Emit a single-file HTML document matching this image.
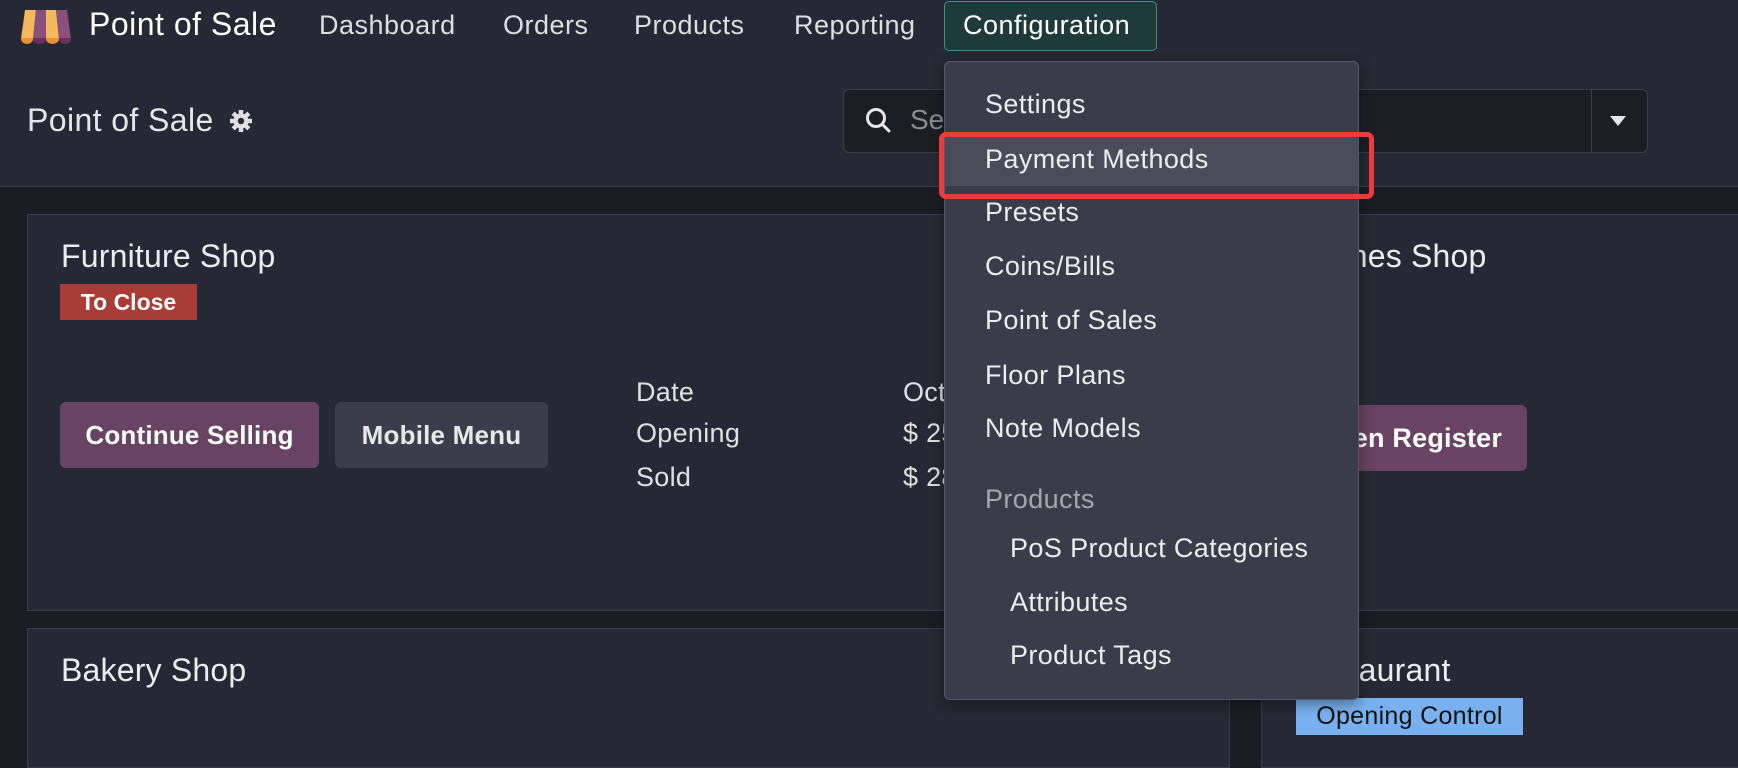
<!DOCTYPE html>
<html><head><meta charset="utf-8"><style>
*{box-sizing:border-box;margin:0;padding:0}
body{width:1738px;height:750px;overflow:hidden;background:#1b1d25;font-family:"Liberation Sans",sans-serif;color:#e4e4e8;position:relative}
.a{position:absolute;white-space:nowrap}
.top{position:absolute;left:0;top:0;width:1738px;height:187px;background:#262935;border-bottom:1px solid #3b3e4b}
.nav{font-size:27px;top:10px;color:#dedee2;letter-spacing:0.5px}
.card{position:absolute;background:#262935;border:1px solid #3a3d4a}
.h{font-size:32px;color:#ececf0;letter-spacing:0.2px}
.btn{position:absolute;border-radius:6px;color:#fff;font-size:26px;font-weight:bold;display:flex;align-items:center;justify-content:center;letter-spacing:0.2px}
.lbl{font-size:27px;color:#e0e0e4;letter-spacing:0.3px}
.dd{position:absolute;left:944px;top:61px;width:415px;height:639px;background:#3a3c49;border:1px solid #555868;border-radius:6px;box-shadow:0 4px 14px rgba(0,0,0,.4)}
.it{position:absolute;font-size:27px;color:#ececf0;letter-spacing:0.4px}
</style></head><body>
<div class="top"></div>
<svg class="a" style="left:20px;top:10px" width="52" height="34" viewBox="0 0 52 34">
<path d="M5 0h11l-3 29H1z" fill="#f4b95a"/>
<path d="M16 0h10v29H13z" fill="#8b4f7c"/>
<path d="M26 0h10l3 29H26z" fill="#f4b95a"/>
<path d="M36 0h11l4 29H39z" fill="#8b4f7c"/>
<path d="M1 28h12v1a6 5 0 0 1-12 0z" fill="#ef8f35"/>
<path d="M13 28h13v1a6.5 5 0 0 1-13 0z" fill="#6a3060"/>
<path d="M26 28h13v1a6.5 5 0 0 1-13 0z" fill="#ef8f35"/>
<path d="M39 28h12v1a6 5 0 0 1-12 0z" fill="#6a3060"/>
</svg>
<div class="a" style="left:89px;top:6px;font-size:32px;color:#fff;letter-spacing:0.5px">Point of Sale</div>
<div class="a nav" style="left:319px">Dashboard</div>
<div class="a nav" style="left:503px">Orders</div>
<div class="a nav" style="left:634px">Products</div>
<div class="a nav" style="left:794px">Reporting</div>
<div class="a" style="left:944px;top:1px;width:213px;height:50px;background:#1f3a3b;border:1px solid #3f8f83;border-radius:5px"></div>
<div class="a nav" style="left:963px;color:#fff">Configuration</div>

<div class="a" style="left:27px;top:102px;font-size:32px;color:#e6e6ea;letter-spacing:0.4px">Point of Sale</div>
<svg class="a" style="left:229px;top:109px" width="24" height="24" viewBox="0 0 24 24"><g fill="#e0e0e4"><circle cx="12" cy="12" r="7.5"/><g stroke="#e0e0e4" stroke-width="4.5"><path d="M12 1v22M1 12h22M4.2 4.2l15.6 15.6M19.8 4.2L4.2 19.8"/></g></g><circle cx="12" cy="12" r="3.2" fill="#262935"/></svg>

<div class="a" style="left:843px;top:89px;width:805px;height:64px;background:#1c1e26;border:1px solid #3a3d4a;border-radius:6px"></div>
<div class="a" style="left:1591px;top:90px;width:1px;height:62px;background:#3a3d4a"></div>
<svg class="a" style="left:864px;top:106px" width="30" height="30" viewBox="0 0 30 30"><circle cx="12" cy="12" r="8.5" fill="none" stroke="#e6e6ea" stroke-width="3"/><path d="M18 18l7 7" stroke="#e6e6ea" stroke-width="3" stroke-linecap="round"/></svg>
<div class="a" style="left:910px;top:104px;font-size:28px;color:#8a8c96">Search...</div>
<svg class="a" style="left:1610px;top:116px" width="16" height="10" viewBox="0 0 16 10"><path d="M0 0h16L8 10z" fill="#e6e6ea"/></svg>

<div class="card" style="left:27px;top:214px;width:1203px;height:397px"></div>
<div class="card" style="left:1261px;top:214px;width:490px;height:397px"></div>
<div class="card" style="left:27px;top:628px;width:1203px;height:140px"></div>
<div class="card" style="left:1261px;top:628px;width:490px;height:140px"></div>

<div class="a h" style="left:61px;top:238px">Furniture Shop</div>
<div class="a" style="left:60px;top:284px;width:137px;height:36px;background:#a93c37;color:#fff;font-size:23px;font-weight:bold;display:flex;align-items:center;justify-content:center">To Close</div>
<div class="btn" style="left:60px;top:402px;width:259px;height:66px;background:#684363">Continue Selling</div>
<div class="btn" style="left:335px;top:402px;width:213px;height:66px;background:#3b3d4a;color:#e8e8ec">Mobile Menu</div>
<div class="a lbl" style="left:636px;top:377px">Date</div>
<div class="a lbl" style="left:636px;top:418px">Opening</div>
<div class="a lbl" style="left:636px;top:462px">Sold</div>
<div class="a lbl" style="left:903px;top:377px">Oct 15</div>
<div class="a lbl" style="left:903px;top:418px">$ 250.00</div>
<div class="a lbl" style="left:903px;top:462px">$ 280.00</div>

<div class="a h" style="left:1292px;top:238px">Clothes Shop</div>
<div class="btn" style="left:1290px;top:405px;width:237px;height:66px;background:#684363;font-size:27px">Open Register</div>

<div class="a h" style="left:61px;top:652px">Bakery Shop</div>
<div class="a h" style="left:1292px;top:652px">Restaurant</div>
<div class="a" style="left:1296px;top:698px;width:227px;height:37px;background:#79b1f0;color:#111;font-size:25px;display:flex;align-items:center;justify-content:center;letter-spacing:0.3px">Opening Control</div>

<div class="dd"></div>
<div class="a" style="left:945px;top:134px;width:413px;height:52px;background:#4a4c59"></div>
<div class="it" style="left:985px;top:89px">Settings</div>
<div class="it" style="left:985px;top:144px">Payment Methods</div>
<div class="it" style="left:985px;top:197px">Presets</div>
<div class="it" style="left:985px;top:251px">Coins/Bills</div>
<div class="it" style="left:985px;top:305px">Point of Sales</div>
<div class="it" style="left:985px;top:360px">Floor Plans</div>
<div class="it" style="left:985px;top:413px">Note Models</div>
<div class="it" style="left:985px;top:484px;color:#a4a6b0">Products</div>
<div class="it" style="left:1010px;top:533px">PoS Product Categories</div>
<div class="it" style="left:1010px;top:587px">Attributes</div>
<div class="it" style="left:1010px;top:640px">Product Tags</div>
<div class="a" style="left:939px;top:132px;width:435px;height:67px;border:5px solid #f03a3a;border-radius:7px"></div>
</body></html>
